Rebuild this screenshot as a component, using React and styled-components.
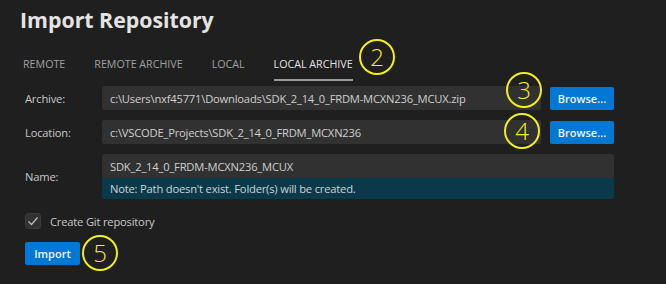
import React from 'react';
import styled, { createGlobalStyle } from 'styled-components';

const Global = createGlobalStyle`
  html, body {
    margin: 0;
    background: #1f1f1f;
  }
  body {
    font-family: "Open Sans", "Noto Sans", sans-serif;
    color: #cccccc;
  }
`;

const Page = styled.div`
  position: relative;
  width: 666px;
  height: 284px;
  box-sizing: border-box;
  padding: 4px 0 0 20px;
  overflow: hidden;
`;

const Title = styled.h1`
  margin: 0;
  font-size: 21.3px;
  font-weight: 700;
  line-height: 32px;
  color: #e4e4e4;
`;

const Tabs = styled.div`
  display: flex;
  gap: 29px;
  margin: 21px 0 0 3px;
`;

const Tab = styled.div`
  font-size: 10.7px;
  line-height: 14px;
  padding-bottom: 8px;
  text-transform: uppercase;
  color: ${p => (p.$active ? '#e2e2e2' : '#a0a0a0')};
  border-bottom: 2px solid ${p => (p.$active ? '#9a9a9a' : 'transparent')};
`;

const Form = styled.div`
  display: grid;
  grid-template-columns: 68px 439px 64px;
  column-gap: 9px;
  row-gap: 10px;
  align-items: center;
  margin: 5px 0 0 5px;
`;

const Text = styled.div`
  font-size: 11.2px;
  letter-spacing: -0.2px;
  color: #c8c8c8;
`;

const Input = styled(Text)`
  height: 24px;
  box-sizing: border-box;
  padding: 0 8px;
  display: flex;
  align-items: center;
  background: #313131;
  border-radius: 2px;
  color: #cfcfcf;
  white-space: nowrap;
`;

const Button = styled.div`
  height: 23px;
  box-sizing: border-box;
  padding: 0 8px;
  display: flex;
  align-items: center;
  justify-content: center;
  background: #0078d4;
  border-radius: 2px;
  font-size: 11px;
  font-weight: 600;
  color: #f2f6fa;
  width: ${p => p.$width || 'auto'};
`;

const NameBlock = styled.div`
  grid-column: 2 / 4;
  display: flex;
  flex-direction: column;
  border-radius: 2px;
  overflow: hidden;
`;

const Note = styled(Text)`
  height: 21px;
  padding: 0 8px;
  display: flex;
  align-items: center;
  background: #0a3a49;
  color: #c9d4d8;
`;

const CheckRow = styled(Text)`
  display: flex;
  align-items: center;
  gap: 9px;
  margin: 14px 0 0 5px;
`;

const Box = styled.div`
  width: 16px;
  height: 16px;
  border-radius: 3px;
  background: #313131;
  border: 1px solid #3a3a3a;
  box-sizing: border-box;
  display: flex;
  align-items: center;
  justify-content: center;
`;

const Footer = styled.div`
  display: flex;
  margin: 13px 0 0 5px;
`;

const Marker = styled.div`
  position: absolute;
  left: ${p => p.$x - 18}px;
  top: ${p => p.$y - 18}px;
  width: 36px;
  height: 36px;
  box-sizing: border-box;
  border: 2px solid #f2ee1c;
  border-radius: 50%;
  display: flex;
  align-items: center;
  justify-content: center;
  font-size: 24px;
  font-weight: 300;
  line-height: 1;
  color: #f2ee1c;
`;

export default function App() {
  return (
    <Page>
      <Global />
      <Title>Import Repository</Title>
      <Tabs>
        <Tab>Remote</Tab>
        <Tab>Remote Archive</Tab>
        <Tab>Local</Tab>
        <Tab $active>Local Archive</Tab>
      </Tabs>
      <Form>
        <Text>Archive:</Text>
        <Input>c:\Users\nxf45771\Downloads\SDK_2_14_0_FRDM-MCXN236_MCUX.zip</Input>
        <Button>Browse...</Button>
        <Text>Location:</Text>
        <Input>c:\VSCODE_Projects\SDK_2_14_0_FRDM_MCXN236</Input>
        <Button>Browse...</Button>
        <Text>Name:</Text>
        <NameBlock>
          <Input>SDK_2_14_0_FRDM-MCXN236_MCUX</Input>
          <Note>Note: Path doesn't exist. Folder(s) will be created.</Note>
        </NameBlock>
      </Form>
      <CheckRow>
        <Box>
          <svg width="12" height="12" viewBox="0 0 12 12">
            <path d="M1.5 6.5 L4.5 9.5 L10.5 2.5" fill="none" stroke="#bdbdbd" strokeWidth="1.2" />
          </svg>
        </Box>
        Create Git repository
      </CheckRow>
      <Footer>
        <Button $width="55px">Import</Button>
      </Footer>
      <Marker $x={377} $y={57}>2</Marker>
      <Marker $x={524} $y={90}>3</Marker>
      <Marker $x={522} $y={131}>4</Marker>
      <Marker $x={100} $y={253}>5</Marker>
    </Page>
  );
}
